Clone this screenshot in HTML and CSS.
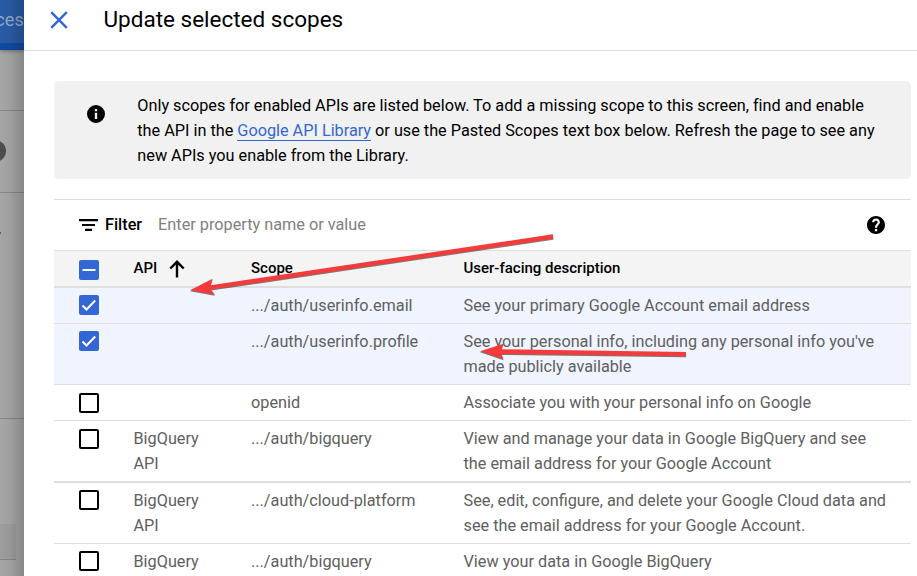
FILE: index.html
```html
<!DOCTYPE html>
<html lang="en">
<head>
<meta charset="utf-8">
<title>Update selected scopes</title>
<link rel="stylesheet" href="styles.css">
</head>
<body>
<div class="app">
  <aside class="backdrop">
    <div class="topbar"><span class="tab">ces</span></div>
    <div class="block block-a"></div>
    <div class="block block-b"><span class="dot"></span></div>
    <div class="block block-c"><span class="link-end"></span></div>
    <div class="block block-d"><span class="field"></span></div>
  </aside>
  <main class="panel">
    <header class="panel-header">
      <svg class="close" viewBox="0 0 18 18"><path d="M1.2 1.2 16.8 16.8M16.8 1.2 1.2 16.8"/></svg>
      <h1>Update selected scopes</h1>
    </header>
    <div class="content">
      <section class="callout">
        <svg class="info" viewBox="2 2 20 20"><path d="M12 2a10 10 0 1 0 0 20 10 10 0 0 0 0-20zm1.3 15.5h-2.6v-7h2.6zm0-8.600h-2.6V6.400h2.6z"/></svg>
        <p>Only scopes for enabled APIs are listed below. To add a missing scope to this screen, find and enable<br>the API in the <a>Google API Library</a> or use the Pasted Scopes text box below. Refresh the page to see any<br>new APIs you enable from the Library.</p>
      </section>
      <section class="table">
        <div class="filter">
          <svg class="filter-icon" viewBox="0 0 19 12"><path d="M0 0h19v2.200H0zM3 4.900h13v2.200H3zM6 9.800h7V12H6z"/></svg>
          <span class="filter-label">Filter</span>
          <span class="placeholder">Enter property name or value</span>
          <svg class="help" viewBox="2 2 20 20"><path d="M12 2C6.480 2 2 6.480 2 12s4.480 10 10 10 10-4.480 10-10S17.520 2 12 2zm1.300 17h-2.500v-2.500h2.500V19zm2-7.750-.9.920C13.700 12.900 13.300 13.500 13.300 15h-2.500v-.5c0-1.100.45-2.100 1.170-2.830l1.240-1.260c.37-.36.59-.86.59-1.410 0-1.100-.8-1.900-1.800-1.900s-1.900.8-1.900 1.900H7.700c0-2.350 1.900-4.200 4.300-4.200s4.300 1.850 4.300 4.200c0 .88-.36 1.680-1 2.250z"/></svg>
        </div>
        <div class="row head">
          <span class="box on"><svg viewBox="0 0 20 20"><path d="M3.500 10h13"/></svg></span>
          <span class="api">API<svg class="sort" viewBox="0 0 16 18"><path d="M8 17.500V2M1.300 8.500 8 1.800l6.700 6.700"/></svg></span>
          <span>Scope</span>
          <span>User-facing description</span>
        </div>
        <div class="row selected">
          <span class="box on"><svg viewBox="0 0 20 20"><path d="M3.500 10.500 7.500 14.500 16.200 5.500"/></svg></span>
          <span></span><span>.../auth/userinfo.email</span>
          <span>See your primary Google Account email address</span>
        </div>
        <div class="row selected">
          <span class="box on"><svg viewBox="0 0 20 20"><path d="M3.500 10.500 7.500 14.500 16.200 5.500"/></svg></span>
          <span></span><span>.../auth/userinfo.profile</span>
          <span>See your personal info, including any personal info you've<br>made publicly available</span>
        </div>
        <div class="row low-box">
          <span class="box"></span>
          <span></span><span>openid</span>
          <span>Associate you with your personal info on Google</span>
        </div>
        <div class="row low-box thick">
          <span class="box"></span>
          <span>BigQuery<br>API</span><span>.../auth/bigquery</span>
          <span>View and manage your data in Google BigQuery and see<br>the email address for your Google Account</span>
        </div>
        <div class="row">
          <span class="box"></span>
          <span>BigQuery<br>API</span><span>.../auth/cloud-platform</span>
          <span>See, edit, configure, and delete your Google Cloud data and<br>see the email address for your Google Account.</span>
        </div>
        <div class="row last">
          <span class="box"></span>
          <span>BigQuery</span><span>.../auth/bigquery</span>
          <span>View your data in Google BigQuery</span>
        </div>
      </section>
    </div>
  </main>
  <svg class="annotations" viewBox="0 0 917 576">
    <path d="M190 290.300 212.500 278.700 210.700 285.300 552.700 234.300 553.400 238.800 211 289.600 214.800 294.800z"/>
    <path d="M480 351.300 503.500 343.700 501.500 349.300 686 352V356.200L501.500 353.900 503.500 359.300z"/>
  </svg>
</div>
</body>
</html>
```
FILE: styles.css
```css
* { box-sizing: border-box; }
body {
  margin: 0;
  font-family: Roboto, "Liberation Sans", sans-serif;
  font-size: 16.25px;
  line-height: 25px;
  color: #000;
}
.app {
  position: relative;
  display: flex;
  width: 917px;
  height: 576px;
  overflow: hidden;
  background: #fff;
}
.backdrop {
  position: relative;
  flex: 0 0 24px;
  height: 576px;
  overflow: hidden;
  background: #a6a6a6;
}
.backdrop::after {
  content: "";
  position: absolute;
  inset: 0;
  background: linear-gradient(to right, rgba(0,0,0,0), rgba(0,0,0,.04) 40%, rgba(0,0,0,.19));
}
.topbar {
  display: flex;
  justify-content: flex-end;
  height: 50px;
  padding: 7px 0 0;
  background: #295ba5;
  border-bottom: 7px solid #0f4ba3;
  box-shadow: 0 1px 4px rgba(0,0,0,.35);
}
.tab { font-size: 18px; letter-spacing: .2px; color: #94a9cb; }
.block { border-bottom: 1px solid #888; }
.block-a { height: 61px; }
.block-b { height: 82px; padding-top: 29px; }
.block-c { height: 226px; padding-top: 39px; }
.block-d { height: 158px; padding-top: 105px; }
.dot { display: block; width: 22px; height: 22px; margin-left: -16px; border-radius: 50%; background: #4d4d4d; }
.link-end { display: block; width: 1px; height: 2px; background: #2a70a8; }
.field { display: block; width: 16px; height: 36px; background: #9d9d9d; border-bottom: 1px solid #858585; }
.panel { flex: 1; background: #fff; }
.panel-header {
  display: flex;
  align-items: flex-start;
  height: 51px;
  padding: 11px 0 0 26px;
  border-bottom: 1px solid #dcdcdc;
}
.close { width: 18px; height: 18px; fill: none; stroke: #3367d6; stroke-width: 2.400; }
.panel-header h1 {
  margin: -6px 0 0 35.500px;
  font-size: 22.500px;
  font-weight: 400;
  line-height: 28px;
}
.content { padding: 30px 6px 0 30px; }
.callout {
  display: flex;
  height: 98px;
  padding: 12px 0 0 33px;
  border-radius: 5px;
  background: #f1f1f1;
}
.info { flex: none; width: 18px; height: 18px; margin-top: 12px; }
.callout p { margin: 0 0 0 32.300px; white-space: nowrap; letter-spacing: -.005px; }
.callout a { color: #3367d6; border-bottom: 1px solid #3367d6; }
.table { margin-top: 20px; border-top: 1px solid #dcdcdc; }
.filter { display: flex; align-items: center; height: 50px; padding: 0 26px 0 25px; }
.filter-icon { width: 19px; height: 12px; }
.filter-label { margin: -2px 0 0 7px; font-weight: 500; }
.placeholder { margin: -2px 0 0 16px; color: #808080; }
.help { width: 18px; height: 18px; margin-left: auto; }
.row {
  display: grid;
  grid-template-columns: 20px 117.500px 212.500px 1fr;
  padding: 5px 0 5px 25px;
  color: #606060;
  border-bottom: 1px solid #dedede;
  white-space: nowrap;
}
.row > :not(.box) { padding-left: 34.500px; }
.row.head {
  height: 38px;
  font-size: 15px;
  font-weight: 500;
  color: #000;
  background: #f4f4f4;
  border-top: 1px solid #dedede;
  border-bottom-width: 2px;
}
.row.selected { background: #eff4fe; }
.row.thick { border-bottom-width: 2px; }
.row.last { border-bottom: 0; padding-bottom: 0; }
.api { display: flex; }
.sort { width: 16px; height: 18px; margin: 4px 0 0 12px; fill: none; stroke: #000; stroke-width: 2.400; }
.box { width: 20px; height: 20px; margin-top: 2px; border: 2px solid #000; border-radius: 2px; }
.box.on { border: 0; background: #3367d6; }
.head .box { margin-top: 4px; }
.low-box .box { margin-top: 3px; }
.box svg { display: block; width: 20px; height: 20px; fill: none; stroke: #fff; stroke-width: 2; }
.annotations {
  position: absolute;
  inset: 0;
  width: 917px;
  height: 576px;
  fill: #f43a3a;
  filter: drop-shadow(.5px 1px .6px rgba(0,0,0,.5));
  pointer-events: none;
}
```
